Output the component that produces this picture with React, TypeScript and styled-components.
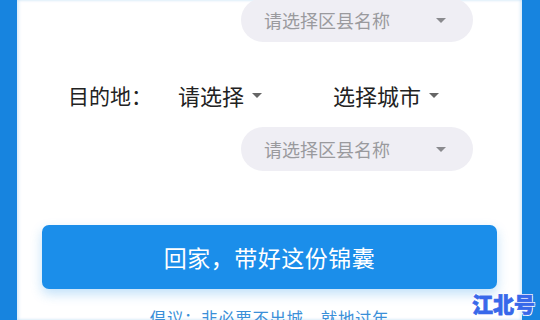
import * as React from "react";
import styled, { createGlobalStyle } from "styled-components";

const GlobalStyle = createGlobalStyle`
  html, body {
    margin: 0;
    padding: 0;
    background: #1784df;
    font-family: "Noto Sans CJK SC", "Noto Sans", sans-serif;
  }
`;

const Page = styled.div`
  width: 540px;
  height: 320px;
  position: relative;
  overflow: hidden;
  background: #1784df;
`;

const Panel = styled.div`
  margin: 0 18px 0 17px;
  height: 320px;
  background: #ffffff;
  display: flex;
  flex-direction: column;
  overflow: hidden;
  box-shadow: inset 2px 0 3px rgba(23, 132, 223, 0.15), inset -2px 0 3px rgba(23, 132, 223, 0.15);
`;

const PillRow = styled.div<{ $top: number }>`
  display: flex;
  justify-content: flex-end;
  padding-right: 49px;
  margin-top: ${(p) => p.$top}px;
`;

const Pill = styled.div`
  width: 232px;
  height: 44px;
  border-radius: 22px;
  background: #efeef4;
  box-sizing: border-box;
  padding: 0 27px 0 23px;
  display: flex;
  align-items: center;
  justify-content: space-between;
`;

const PillText = styled.span`
  font-size: 18px;
  color: #9a9a9e;
  line-height: 44px;
`;

const Caret = styled.span<{ $color: string }>`
  width: 0;
  height: 0;
  border-left: 5px solid transparent;
  border-right: 5px solid transparent;
  border-top: 5px solid ${(p) => p.$color};
`;

const FieldRow = styled.div`
  display: flex;
  align-items: center;
  height: 30px;
  margin-top: 38px;
  padding-left: 51px;
`;

const Label = styled.span`
  width: 110px;
  font-size: 21px;
  color: #222222;
  line-height: 30px;
`;

const Select = styled.div<{ $width: number }>`
  width: ${(p) => p.$width}px;
  display: flex;
  align-items: center;
  gap: 8px;
  font-size: 22px;
  color: #222222;
  line-height: 30px;
`;

const MainButton = styled.button`
  margin: 54px 25px 0 25px;
  height: 64px;
  border: none;
  border-radius: 7px;
  background: #1b8eea;
  box-shadow: 0 5px 12px rgba(27, 142, 234, 0.28);
  color: #ffffff;
  font-family: "Noto Sans CJK SC", "Noto Sans", sans-serif;
  font-size: 23px;
  letter-spacing: 0.5px;
  flex-shrink: 0;
`;

const Note = styled.div`
  margin-top: 17px;
  text-align: center;
  font-size: 16.5px;
  line-height: 24px;
  color: #3a8fd8;
  letter-spacing: 0.6px;
`;

const Watermark = styled.div`
  position: absolute;
  left: 472px;
  top: 290px;
  font-size: 21px;
  font-weight: 900;
  color: #3868ea;
  line-height: 26px;
  -webkit-text-stroke: 0.7px #3868ea;
  text-shadow: 1px 1px 0 #fff, -1px -1px 0 #fff, 1px -1px 0 #fff, -1px 1px 0 #fff;
`;

export default function App() {
  return (
    <Page>
      <GlobalStyle />
      <Panel>
        <PillRow $top={-2}>
          <Pill>
            <PillText>请选择区县名称</PillText>
            <Caret $color="#8a8a8e" />
          </Pill>
        </PillRow>
        <FieldRow>
          <Label>目的地：</Label>
          <Select $width={155}>
            请选择
            <Caret $color="#666666" />
          </Select>
          <Select $width={140}>
            选择城市
            <Caret $color="#666666" />
          </Select>
        </FieldRow>
        <PillRow $top={17}>
          <Pill>
            <PillText>请选择区县名称</PillText>
            <Caret $color="#8a8a8e" />
          </Pill>
        </PillRow>
        <MainButton>回家，带好这份锦囊</MainButton>
        <Note>倡议：非必要不出城，就地过年</Note>
      </Panel>
      <Watermark>江北号</Watermark>
    </Page>
  );
}
